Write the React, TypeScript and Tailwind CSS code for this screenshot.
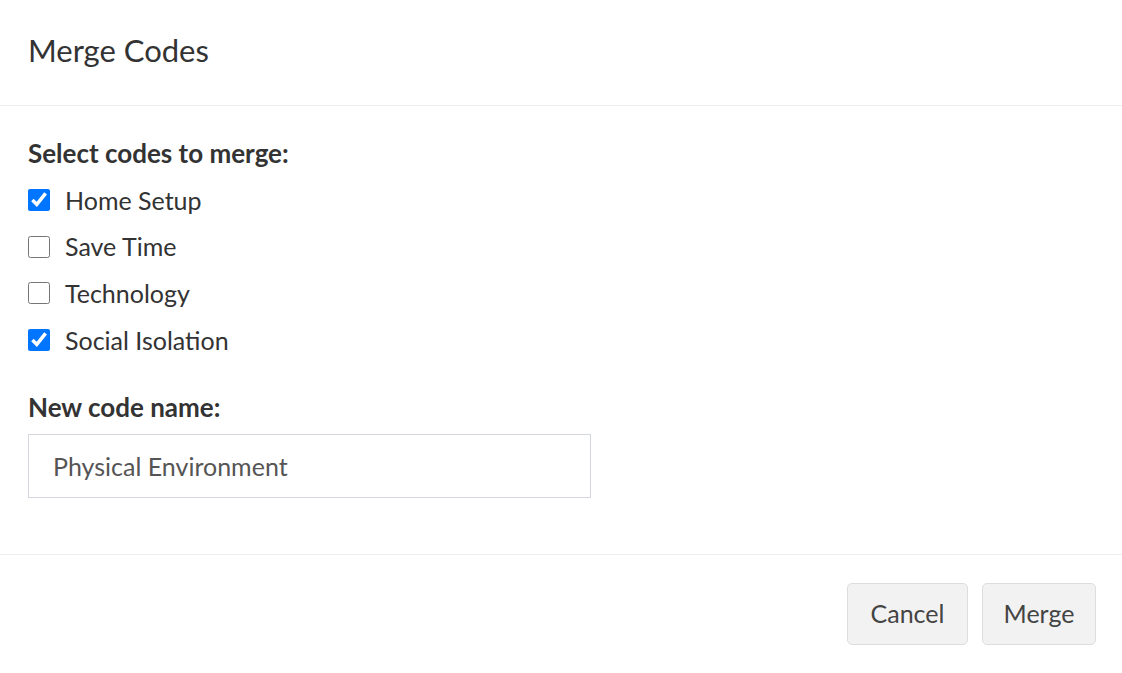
import { useState } from "react";

const CODES = ["Home Setup", "Save Time", "Technology", "Social Isolation"];

export default function App() {
	const [checked, setChecked] = useState<boolean[]>([true, false, false, true]);
	const [name, setName] = useState("Physical Environment");

	const toggle = (i: number) => {
		setChecked((prev) => prev.map((v, idx) => (idx === i ? !v : v)));
	};

	return (
		<div className="w-[1122px] h-[673px] bg-white text-[#333] font-['Lato','Noto_Sans',sans-serif] flex flex-col">
			{/* Header */}
			<div className="h-[106px] px-7 flex items-center border-b border-[#eeeeee]">
				<h1 className="text-[31px] leading-none pb-[4px]">Merge Codes</h1>
			</div>

			{/* Body */}
			<div className="px-7 pt-[34px] h-[449px] border-b border-[#eeeeee]">
				<div className="text-[26px] font-bold leading-none">Select codes to merge:</div>
				<div className="mt-[11px] flex flex-col">
					{CODES.map((code, i) => (
						<label key={code} className="h-[46.6px] flex items-center gap-[15px] cursor-pointer">
							<input
								type="checkbox"
								checked={checked[i]}
								onChange={() => toggle(i)}
								className="w-[22px] h-[22px] m-0 accent-[#0075ff]"
							/>
							<span className="text-[25px] leading-none">{code}</span>
						</label>
					))}
				</div>
				<div className="mt-[31px] text-[26px] font-bold leading-none">New code name:</div>
				<input
					type="text"
					value={name}
					onChange={(e) => setName(e.target.value)}
					className="mt-[14px] w-[563px] h-[64px] px-[24px] border border-[#d4d6de] text-[25px] text-[#555] outline-none"
				/>
			</div>

			{/* Footer */}
			<div className="flex-1 px-[26px] flex items-start justify-end gap-[14px] pt-[28px]">
				<button className="w-[121px] h-[62px] rounded-[5px] bg-[#f2f2f2] border border-[#dddddd] text-[25px] text-[#444]">
					Cancel
				</button>
				<button className="w-[114px] h-[62px] rounded-[5px] bg-[#f2f2f2] border border-[#dddddd] text-[25px] text-[#444]">
					Merge
				</button>
			</div>
		</div>
	);
}
